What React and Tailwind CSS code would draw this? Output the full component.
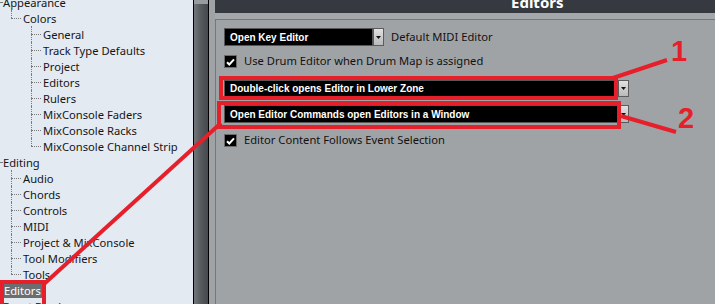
import React from 'react';

const tree = [
  { label: 'Appearance', level: 0, parent: true },
  { label: 'Colors', level: 1, last: true },
  { label: 'General', level: 2 },
  { label: 'Track Type Defaults', level: 2 },
  { label: 'Project', level: 2 },
  { label: 'Editors', level: 2 },
  { label: 'Rulers', level: 2 },
  { label: 'MixConsole Faders', level: 2 },
  { label: 'MixConsole Racks', level: 2 },
  { label: 'MixConsole Channel Strip', level: 2, last: true },
  { label: 'Editing', level: 0 },
  { label: 'Audio', level: 1 },
  { label: 'Chords', level: 1 },
  { label: 'Controls', level: 1 },
  { label: 'MIDI', level: 1 },
  { label: 'Project & MixConsole', level: 1 },
  { label: 'Tool Modifiers', level: 1 },
  { label: 'Tools', level: 1, last: true },
  { label: 'Editors', level: 0, selected: true },
  { label: 'Event Display', level: 0 },
];

const indent = ['pl-[3px]', 'pl-[23px]', 'pl-[43px]'];
const guideLeft = ['left-[11px]', 'left-[31px]'];

const TreeRow = ({ item }) => (
  <div className={`relative h-[16px] flex items-center ${indent[item.level]}`}>
    {item.level === 0 && (
      <span className="absolute left-0 top-[8px] w-[2px] border-t border-dotted border-[#7a7a7a]" />
    )}
    {item.parent && (
      <span className="absolute left-[11px] top-[12px] h-[4px] border-l border-dotted border-[#7a7a7a]" />
    )}
    {item.level > 0 && (
      <>
        <span
          className={`absolute ${guideLeft[item.level - 1]} top-0 border-l border-dotted border-[#7a7a7a] ${
            item.last ? 'h-[8px]' : 'h-[16px]'
          }`}
        />
        <span
          className={`absolute ${guideLeft[item.level - 1]} top-[8px] w-[10px] border-t border-dotted border-[#7a7a7a]`}
        />
      </>
    )}
    <span
      className={`whitespace-nowrap leading-[15px] ${
        item.selected ? 'bg-[#6b6e71] text-white px-[1px]' : 'text-[#151515]'
      }`}
    >
      {item.label}
    </span>
  </div>
);

const Arrow = () => (
  <div className="w-[11px] self-stretch bg-gradient-to-b from-[#e2e2e2] to-[#b9b9b9] border border-[#5c5c5c] flex items-center justify-center">
    <svg width="5" height="3" viewBox="0 0 5 3">
      <path d="M0 0h5L2.5 3z" fill="#111" />
    </svg>
  </div>
);

const Dropdown = ({ label, width, height }) => (
  <div className={`flex ${width} ${height}`}>
    <div className="flex-1 bg-black border border-[#575757] flex items-center pl-[5px] text-white font-bold text-[10px] font-['Liberation_Sans',sans-serif] whitespace-nowrap">
      {label}
    </div>
    <Arrow />
  </div>
);

const Checkbox = ({ label }) => (
  <div className="flex items-center gap-[7px] h-[13px]">
    <div className="w-[13px] h-[13px] bg-black border border-[#6c6c6c] flex items-center justify-center">
      <svg width="9" height="8" viewBox="0 0 9 8">
        <path d="M1 4.2l2.3 2.3L8 1.3" stroke="#fff" strokeWidth="2" fill="none" />
      </svg>
    </div>
    <span className="text-[#111] whitespace-nowrap">{label}</span>
  </div>
);

export default function App() {
  return (
    <div className="relative w-[715px] h-[304px] overflow-hidden flex bg-[#a0a3a6] font-['Noto_Sans',sans-serif] text-[11.2px]">
      <aside className="w-[193px] shrink-0 bg-[#e4eaf2] overflow-hidden">
        <div className="-mt-[6px]">
          {tree.map((item, i) => (
            <TreeRow key={i} item={item} />
          ))}
        </div>
      </aside>

      <div className="w-[16px] shrink-0 border-x border-black flex flex-col">
        <div className="h-[4px] bg-[#9a9da0]" />
        <div className="flex-1 bg-gradient-to-r from-[#74777a] via-[#55585c] to-[#45484c]" />
      </div>

      <div className="flex-1 flex flex-col pl-[6px]">
        <div className="h-[13px] bg-[#363a40] overflow-hidden pl-[296px]">
          <div className="-mt-[7px] text-white font-bold text-[15px] leading-[18px]">Editors</div>
        </div>
        <div className="h-[6px] bg-[#a5a8ab]" />
        <div className="flex-1 border-t border-l border-[#75787b] pl-[8px] flex flex-col">
          <div className="mt-[8px] flex items-center gap-[7px]">
            <Dropdown label="Open Key Editor" width="w-[160px]" height="h-[18px]" />
            <span className="text-[#111]">Default MIDI Editor</span>
          </div>
          <div className="mt-[9px]">
            <Checkbox label="Use Drum Editor when Drum Map is assigned" />
          </div>
          <div className="mt-[12px]">
            <Dropdown label="Double-click opens Editor in Lower Zone" width="w-[405px]" height="h-[17px]" />
          </div>
          <div className="mt-[8px]">
            <Dropdown label="Open Editor Commands open Editors in a Window" width="w-[405px]" height="h-[18px]" />
          </div>
          <div className="mt-[11px]">
            <Checkbox label="Editor Content Follows Event Selection" />
          </div>
        </div>
      </div>

      <svg className="absolute inset-0 pointer-events-none" width="715" height="304">
        <g stroke="#e5202b" strokeWidth="4" fill="none">
          <rect x="221" y="78" width="395" height="20" />
          <rect x="219" y="103" width="400" height="24" />
          <rect x="2" y="282" width="42" height="30" />
          <line x1="613" y1="78" x2="667" y2="60" />
          <line x1="621" y1="116" x2="676" y2="132" />
          <line x1="44" y1="284" x2="221" y2="123" />
        </g>
      </svg>
      <span className="absolute left-[671px] top-[37px] text-[#e5202b] font-bold text-[29px] leading-[29px] font-['Liberation_Sans',sans-serif]">
        1
      </span>
      <span className="absolute left-[678px] top-[104px] text-[#e5202b] font-bold text-[29px] leading-[29px] font-['Liberation_Sans',sans-serif]">
        2
      </span>
    </div>
  );
}
